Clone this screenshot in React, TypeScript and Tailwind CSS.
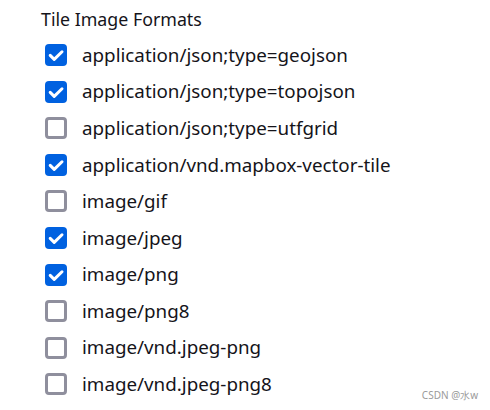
import { useState } from "react";

const formats: { label: string; checked: boolean }[] = [
  { label: "application/json;type=geojson", checked: true },
  { label: "application/json;type=topojson", checked: true },
  { label: "application/json;type=utfgrid", checked: false },
  { label: "application/vnd.mapbox-vector-tile", checked: true },
  { label: "image/gif", checked: false },
  { label: "image/jpeg", checked: true },
  { label: "image/png", checked: true },
  { label: "image/png8", checked: false },
  { label: "image/vnd.jpeg-png", checked: false },
  { label: "image/vnd.jpeg-png8", checked: false },
];

function Box({ checked }: { checked: boolean }) {
  if (checked) {
    return (
      <span className="grid size-[22px] shrink-0 place-items-center rounded-[4px] bg-[#0061e0]">
        <svg width="22" height="22" viewBox="0 0 22 22" fill="none">
          <path
            d="M5.2 11.4l4 4 7.8-7.6"
            stroke="#fff"
            strokeWidth="3"
            strokeLinecap="round"
            strokeLinejoin="round"
          />
        </svg>
      </span>
    );
  }
  return <span className="size-[22px] shrink-0 rounded-[4px] border-[3px] border-[#8f8f9d] bg-white" />;
}

export default function App() {
  const [items, setItems] = useState(formats);

  return (
    <div className="relative h-[410px] w-[490px] bg-white font-['Noto_Sans',sans-serif] text-[#15141a]">
      <div className="pt-[8px] pl-[41px]">
        <div className="text-[17.8px] leading-[22px]">Tile Image Formats</div>
        <div className="mt-[7px] flex flex-col pl-[4px]">
          {items.map((item, i) => (
            <label
              key={item.label}
              className="flex h-[36.55px] cursor-pointer items-center gap-[15px]"
              onClick={() =>
                setItems((prev) => prev.map((p, j) => (j === i ? { ...p, checked: !p.checked } : p)))
              }
            >
              <Box checked={item.checked} />
              <span className="text-[18.8px] leading-none">{item.label}</span>
            </label>
          ))}
        </div>
      </div>
      <div className="absolute right-[12px] bottom-[7px] text-[10px] text-[#9a9a9a]">CSDN @水w</div>
    </div>
  );
}
